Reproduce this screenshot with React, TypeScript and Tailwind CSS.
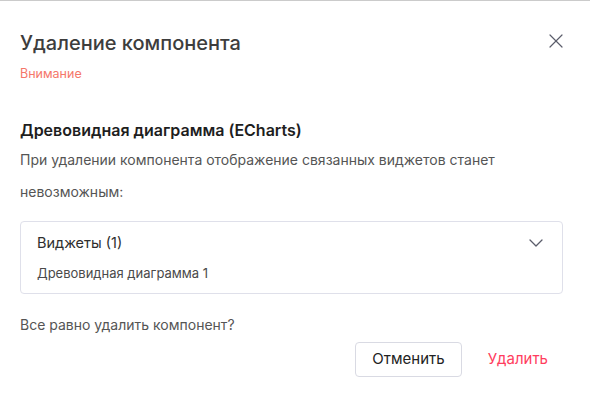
import { X, ChevronDown } from "lucide-react";

const App = () => {
  return (
    <div className="w-[590px] h-[400px] bg-white font-['Inter','Noto_Sans',sans-serif] overflow-hidden">
      <div className="h-px bg-[#cbcbcb]" />
      <div className="px-5">
        <div className="flex items-start justify-between pt-[29px]">
          <h2 className="text-[20px] leading-[26px] font-medium text-[#3d3d3d]">Удаление компонента</h2>
          <button className="mt-[-1px] mr-[2px] text-[#5b5d6b]">
            <X size={24} strokeWidth={1.2} />
          </button>
        </div>
        <div className="mt-[10px] text-[12.5px] leading-[16px] text-[#f5776a]">Внимание</div>

        <div className="mt-[37px] text-[16px] leading-[22px] font-semibold text-[#1e1e1e]">
          Древовидная диаграмма (ECharts)
        </div>
        <p className="mt-[3px] text-[14px] leading-[32px] text-[#555555] pr-[40px]">
          При удалении компонента отображение связанных виджетов станет невозможным:
        </p>

        <div className="mt-[13px] mr-[7px] border border-[#dfe0ea] rounded-[4px] pl-4 pr-[14px] pt-[9px] pb-[11px]">
          <div className="flex items-center justify-between">
            <span className="text-[14.5px] leading-[24px] text-[#2e2e2e]">Виджеты (1)</span>
            <ChevronDown size={24} strokeWidth={1.3} className="text-[#5b5d6b]" />
          </div>
          <div className="mt-[9px] text-[13px] leading-[18px] text-[#4a4a4a]">Древовидная диаграмма 1</div>
        </div>

        <div className="mt-[21px] text-[14px] leading-[20px] text-[#555555]">Все равно удалить компонент?</div>

        <div className="flex justify-end items-center gap-[26px] mt-[7px] pr-[22px]">
          <button className="h-[35px] px-[16px] border border-[#d9dae3] rounded-[4px] text-[15px] text-[#222222]">
            Отменить
          </button>
          <button className="text-[15px] text-[#ff3d5e]">Удалить</button>
        </div>
      </div>
    </div>
  );
};

export default App;
